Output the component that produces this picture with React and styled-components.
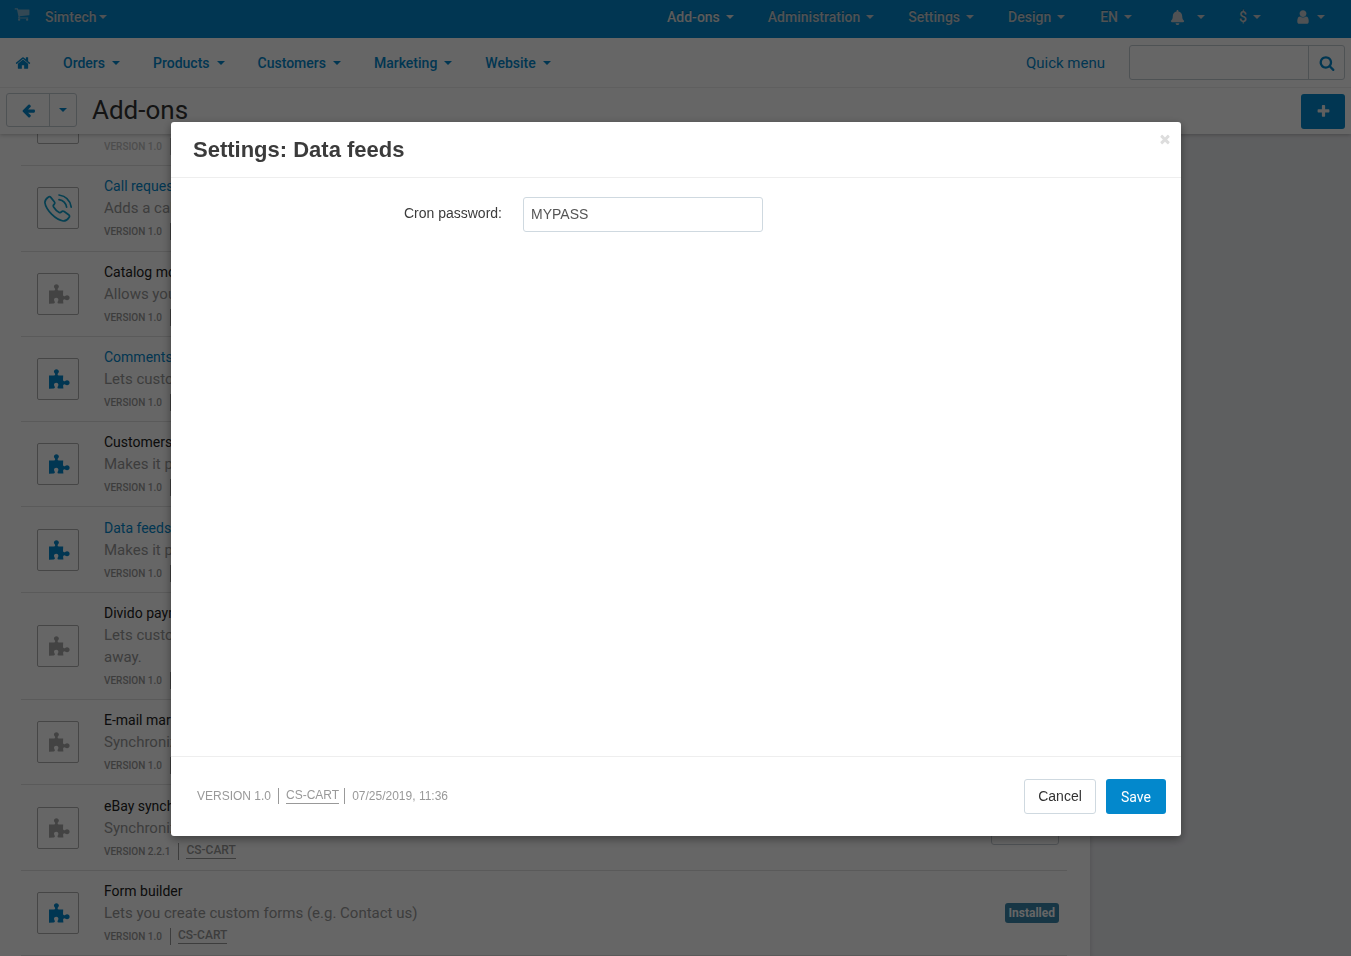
import React from 'react';
import styled, { createGlobalStyle } from 'styled-components';
import { FaBell } from 'react-icons/fa';

const paths = {
    cart: 'M704 1536q0 52-38 90t-90 38-90-38-38-90 38-90 90-38 90 38 38 90zm896 0q0 52-38 90t-90 38-90-38-38-90 38-90 90-38 90 38 38 90zm128-1088v512q0 24-16.5 42.5t-40.5 21.5l-1044 122q13 60 13 70 0 16-24 64h920q26 0 45 19t19 45-19 45-45 19h-1024q-26 0-45-19t-19-45q0-11 8-31.5t16-36 21.5-40 15.5-29.5l-177-823h-204q-26 0-45-19t-19-45 19-45 45-19h256q16 0 28.5 6.5t19.5 15.5 13 24.5 8 26 5.5 29.5 4.5 26h1201q26 0 45 19t19 45z',
    home: 'M1472 992v480q0 26-19 45t-45 19h-384v-384h-256v384h-384q-26 0-45-19t-19-45v-480q0-1 .5-3t.5-3l575-474 575 474q1 2 1 6zm223-69l-62 74q-8 9-21 11h-3q-13 0-21-7l-692-577-692 577q-12 8-24 7-13-2-21-11l-62-74q-8-10-7-23.5t11-21.5l719-599q32-26 76-26t76 26l244 204v-195q0-14 9-23t23-9h192q14 0 23 9t9 23v408l219 182q10 8 11 21.5t-7 23.5z',
    user: 'M1536 1399q0 109-62.5 187t-150.5 78h-854q-88 0-150.5-78t-62.5-187q0-85 8.5-160.5t31.5-152 58.5-131 94-89 134.5-34.5q131 128 313 128t313-128q76 0 134.5 34.5t94 89 58.5 131 31.5 152 8.5 160.5zm-256-887q0 159-112.5 271.5t-271.5 112.5-271.5-112.5-112.5-271.5 112.5-271.5 271.5-112.5 271.5 112.5 112.5 271.5z',
    search: 'M1216 832q0-185-131.5-316.5t-316.5-131.5-316.5 131.5-131.5 316.5 131.5 316.5 316.5 131.5 316.5-131.5 131.5-316.5zm512 832q0 52-38 90t-90 38q-54 0-90-38l-343-342q-179 124-399 124-143 0-273.5-55.5t-225-150-150-225-55.5-273.5 55.5-273.5 150-225 225-150 273.5-55.5 273.5 55.5 225 150 150 225 55.5 273.5q0 220-124 399l343 343q37 37 37 90z',
    plus: 'M1600 736v192q0 40-28 68t-68 28h-416v416q0 40-28 68t-68 28h-192q-40 0-68-28t-28-68v-416h-416q-40 0-68-28t-28-68v-192q0-40 28-68t68-28h416v-416q0-40 28-68t68-28h192q40 0 68 28t28 68v416h416q40 0 68 28t28 68z',
    back: 'M1664 896v128q0 53-32.5 90.5t-84.5 37.5h-704l293 294q38 36 38 90t-38 90l-75 76q-37 37-90 37-52 0-91-37l-651-652q-37-37-37-90 0-52 37-91l651-650q38-38 91-38 52 0 90 38l75 74q38 38 38 91t-38 91l-293 293h704q52 0 84.5 37.5t32.5 90.5z',
    times: 'M1490 1322q0 40-28 68l-136 136q-28 28-68 28t-68-28l-294-294-294 294q-28 28-68 28t-68-28l-136-136q-28-28-28-68t28-68l294-294-294-294q-28-28-28-68t28-68l136-136q28-28 68-28t68 28l294 294 294-294q28-28 68-28t68 28l136 136q28 28 28 68t-28 68l-294 294 294 294q28 28 28 68z',
};

const Icon = ({ name, size = 16 }) => (
    <svg width={size} height={size} viewBox="0 0 1792 1792" fill="currentColor" aria-hidden="true">
        <path d={paths[name]} />
    </svg>
);

const Puzzle = () => (
    <svg width="22" height="20" viewBox="0 0 22 20" fill="currentColor" aria-hidden="true">
        <path d="M0 6.4 L4.6 6.6 Q6.4 6.4 6.2 5.2 C6 4.5 4.9 3.7 4.9 2.6 C4.9 1.1 6 .2 7.4 .2 C8.8 .2 9.9 1.1 9.9 2.6 C9.9 3.7 8.8 4.5 8.6 5.2 Q8.4 6.4 10 6.6 L14.2 6.4 L14 10.4 Q14.1 12.4 15.4 12.3 C16.2 12.2 16.7 11.2 18 11.2 C19.6 11.2 20.6 12.3 20.6 13.7 C20.6 15.1 19.6 16.2 18 16.2 C16.8 16.2 16.2 15.2 15.4 15.2 Q14.1 15.2 14.1 16.8 L14.4 19.4 L9.6 19.6 Q8.3 19.4 8.5 18.2 C8.7 17.5 9.4 16.9 9.4 15.8 C9.4 14.6 8.4 13.8 7.2 13.8 C6 13.8 5 14.6 5 15.8 C5 16.9 5.8 17.5 5.9 18.3 Q6 19.4 4.8 19.5 L0 19.8 Z" />
    </svg>
);

const PhoneCall = () => (
    <svg width="28" height="28" viewBox="0 0 28 28" fill="none" stroke="currentColor" strokeWidth="1.7" strokeLinecap="round" aria-hidden="true">
        <path d="M4.2 3.2 Q5.7 2.1 7 3.6 L10.3 7.8 Q11.4 9.3 10 10.5 Q8.7 11.6 9.6 13 Q11.8 16.6 15.2 18.5 Q16.4 19.1 17.4 17.9 Q18.6 16.4 20.2 17.5 L24.6 20.7 Q26.2 22 25 23.5 Q22.8 27 19.2 27 Q13.6 26.2 7.6 20.2 Q1.6 13.8 .9 8.6 Q.8 5.6 4.2 3.2 Z" />
        <path d="M15 1 Q25.8 2.8 27.2 13.2" />
        <path d="M15 5.6 Q21.6 6.8 22.6 13.2" />
    </svg>
);

const leftMenu = ['Orders', 'Products', 'Customers', 'Marketing', 'Website'];
const topMenu = ['Add-ons', 'Administration', 'Settings', 'Design'];

const addons = [
    { name: 'Buy together', text: 'Lets you bundle products and sell them together', version: '1.0', icon: 'puzzle', faded: true, action: 'install' },
    { name: 'Call requests', link: true, text: 'Adds a callback request form and the buy now with one click button', version: '1.0', icon: 'phone' },
    { name: 'Catalog mode', text: 'Allows you to turn off the checkout in the store', version: '1.0', icon: 'puzzle', action: 'install' },
    { name: 'Comments and reviews', link: true, text: 'Lets customers leave comments and reviews', version: '1.0', icon: 'puzzle', active: true },
    { name: 'Customers also bought', text: 'Makes it possible to show products bought together', version: '1.0', icon: 'puzzle', active: true },
    { name: 'Data feeds', link: true, text: 'Makes it possible to export products in data feeds', version: '1.0', icon: 'puzzle', active: true },
    { name: 'Divido payments', text: 'Lets customers pay for products in instalments, while you receive the full payment right away.', version: '1.0', icon: 'puzzle', action: 'install' },
    { name: 'E-mail marketing', text: 'Synchronizes newsletter subscribers with mailing services', version: '1.0', icon: 'puzzle', action: 'install' },
    { name: 'eBay synchronization', text: 'Synchronizes products and orders with eBay', version: '2.2.1', icon: 'puzzle', action: 'install' },
    { name: 'Form builder', text: 'Lets you create custom forms (e.g. Contact us)', version: '1.0', icon: 'puzzle', active: true },
];

const AddonRow = ({ addon }) => (
    <Row>
        <IconBox $active={addon.active} $phone={addon.icon === 'phone'}>
            {addon.icon === 'phone' ? <PhoneCall /> : <Puzzle />}
        </IconBox>
        <Info $faded={addon.faded}>
            {addon.link ? <NameLink href="#">{addon.name}</NameLink> : <Name>{addon.name}</Name>}
            <Description>{addon.text}</Description>
            <Meta>
                <Version>Version {addon.version}</Version>
                <Developer href="#">CS-Cart</Developer>
            </Meta>
        </Info>
        {addon.action ? <InstallButton type="button">Install</InstallButton> : <Badge>Installed</Badge>}
    </Row>
);

const App = () => (
    <>
        <GlobalStyle />
        <Page>
            <Header>
                <TopBar>
                    <Store>
                        <CartLink href="#" aria-label="Storefront"><Icon name="cart" /></CartLink>
                        <TopLink href="#" $tight>Simtech<Caret /></TopLink>
                    </Store>
                    <TopNav>
                        {topMenu.map((item, i) => (
                            <TopLink href="#" key={item} $current={i === 0}>{item}<Caret /></TopLink>
                        ))}
                    </TopNav>
                    <Tools>
                        <TopLink href="#">EN<Caret /></TopLink>
                        <TopLink href="#" aria-label="Notifications" $wide><FaBell size={15} /><Caret /></TopLink>
                        <TopLink href="#">$<Caret /></TopLink>
                        <TopLink href="#" aria-label="Account"><Icon name="user" /><Caret /></TopLink>
                    </Tools>
                </TopBar>
                <MenuBar>
                    <HomeLink href="#" aria-label="Home"><Icon name="home" /></HomeLink>
                    <Menu>
                        {leftMenu.map((item) => (
                            <MenuLink href="#" key={item}>{item}<Caret /></MenuLink>
                        ))}
                    </Menu>
                    <QuickMenu href="#">Quick menu</QuickMenu>
                    <Search>
                        <SearchInput type="text" aria-label="Search" />
                        <SearchButton type="button" aria-label="Search"><Icon name="search" /></SearchButton>
                    </Search>
                </MenuBar>
                <TitleBar>
                    <BackGroup>
                        <BackButton type="button" aria-label="Back"><Icon name="back" size={15} /></BackButton>
                        <BackMenu type="button" aria-label="Recent pages"><Caret /></BackMenu>
                    </BackGroup>
                    <PageTitle>Add-ons</PageTitle>
                    <AddButton type="button" aria-label="Add"><Icon name="plus" size={15} /></AddButton>
                </TitleBar>
            </Header>
            <Main>
                <List>
                    {addons.map((addon) => <AddonRow addon={addon} key={addon.name} />)}
                </List>
                <Sidebar />
            </Main>
        </Page>
        <Backdrop>
            <Dialog role="dialog" aria-modal="true" aria-labelledby="dialog-title">
                <DialogHeader>
                    <DialogTitle id="dialog-title">Settings: Data feeds</DialogTitle>
                    <Close type="button" aria-label="Close"><Icon name="times" size={14} /></Close>
                </DialogHeader>
                <DialogBody>
                    <Label htmlFor="cron">Cron password:</Label>
                    <Field id="cron" type="text" defaultValue="MYPASS" />
                </DialogBody>
                <DialogFooter>
                    <FooterMeta>
                        <span>VERSION 1.0</span>
                        <FooterLink><a href="#">CS-CART</a></FooterLink>
                        <span>07/25/2019, 11:36</span>
                    </FooterMeta>
                    <CancelButton type="button">Cancel</CancelButton>
                    <SaveButton type="button">Save</SaveButton>
                </DialogFooter>
            </Dialog>
        </Backdrop>
    </>
);

export default App;

const GlobalStyle = createGlobalStyle`
  * {
    box-sizing: border-box;
  }
  body {
    margin: 0;
    font-family: Roboto, sans-serif;
    font-size: 14px;
    line-height: 20px;
    color: #333;
    background: #fff;
  }
  a {
    color: #0388cc;
    text-decoration: none;
  }
  button, input {
    font: inherit;
  }
  button {
    display: flex;
    align-items: center;
    justify-content: center;
    padding: 0;
    cursor: pointer;
  }
  svg {
    flex: none;
  }
`;

const Page = styled.div`
  min-height: 100vh;
  display: flex;
  flex-direction: column;
`;

const Header = styled.header`
  position: relative;
  z-index: 1;
  flex: none;
  background: #fff;
  box-shadow: 0 1px 4px rgba(0, 0, 0, 0.25);
`;

const TopBar = styled.div`
  display: flex;
  align-items: center;
  height: 38px;
  padding: 0 26px 4px 14px;
  background: #0388cc;
`;

const Caret = styled.span`
  flex: none;
  border: 4px solid transparent;
  border-top-color: currentColor;
  border-bottom: 0;
`;

const Store = styled.div`
  flex: 1;
  display: flex;
  align-items: center;
  gap: 15px;
`;

const CartLink = styled.a`
  display: flex;
  padding-bottom: 6px;
  color: #7fb4d2;
`;

const TopLink = styled.a`
  display: flex;
  align-items: center;
  gap: ${({ $tight, $wide }) => ($tight ? '2px' : $wide ? '12px' : '6px')};
  padding-left: ${({ $wide }) => ($wide ? '4px' : '0')};
  font-size: 14px;
  font-weight: 500;
  color: ${({ $current }) => ($current ? '#e4e4e4' : '#c8ced2')};
  text-shadow: 0 -1px 0 rgba(0, 0, 0, 0.25);
`;

const TopNav = styled.nav`
  display: flex;
  gap: 34px;
`;

const Tools = styled.div`
  display: flex;
  gap: 34px;
  margin-left: 35px;
`;

const MenuBar = styled.div`
  display: flex;
  align-items: center;
  height: 50px;
  padding: 0 6px 0 15px;
  border-bottom: 1px solid #ededed;
`;

const HomeLink = styled.a`
  display: flex;
  margin-right: 32px;
`;

const Menu = styled.nav`
  flex: 1;
  display: flex;
  gap: 33px;
`;

const MenuLink = styled.a`
  display: flex;
  align-items: center;
  gap: 7px;
  font-weight: 500;
`;

const QuickMenu = styled.a`
  margin-right: 24px;
  font-size: 15px;
`;

const Search = styled.div`
  display: flex;
  width: 216px;
  height: 35px;
  border: 1px solid #c4ccd2;
  border-radius: 3px;
`;

const SearchInput = styled.input`
  flex: 1;
  min-width: 0;
  border: 0;
  background: none;
`;

const SearchButton = styled.button`
  width: 36px;
  border: 0;
  border-left: 1px solid #c4ccd2;
  background: none;
  color: #0388cc;
`;

const TitleBar = styled.div`
  display: flex;
  align-items: center;
  height: 46px;
  padding: 0 6px;
`;

const BackGroup = styled.div`
  display: flex;
  width: 71px;
  height: 34px;
  margin-bottom: 2px;
  border: 1px solid #c4ccd2;
  border-radius: 3px;
`;

const BackButton = styled.button`
  flex: 1;
  border: 0;
  background: none;
  color: #0388cc;
`;

const BackMenu = styled.button`
  width: 27px;
  border: 0;
  border-left: 1px solid #c4ccd2;
  background: none;
  color: #0388cc;
`;

const PageTitle = styled.h1`
  flex: 1;
  margin: 0 0 2px 15px;
  font-size: 26px;
  font-weight: 400;
  line-height: 40px;
`;

const AddButton = styled.button`
  width: 44px;
  height: 35px;
  border: 0;
  border-radius: 3px;
  background: #0388cc;
  color: #eee;
`;

// The list is scrolled a little under the header
const Main = styled.main`
  flex: 1;
  display: flex;
  margin-top: -53px;
`;

const List = styled.ul`
  flex: 1;
  display: flex;
  flex-direction: column;
  margin: 0;
  padding: 0 23px 0 21px;
  list-style: none;
`;

const Sidebar = styled.aside`
  width: 261px;
  background: #ecedf1;
  box-shadow: inset 3px 0 4px -2px rgba(0, 0, 0, 0.12);
`;

const Row = styled.li`
  flex: 1 0 auto;
  display: flex;
  align-items: center;
  padding: 0 8px 0 16px;
  border-bottom: 1px solid #e2e2e2;
`;

const IconBox = styled.div`
  display: flex;
  align-items: center;
  justify-content: center;
  flex: none;
  width: 42px;
  height: 42px;
  padding: ${({ $phone }) => ($phone ? '0' : '0 0 0 4px')};
  border: 1px solid #b0b0b0;
  border-radius: 2px;
  color: ${({ $active, $phone }) => ($phone ? '#11a0cc' : $active ? '#0388cc' : '#a8a8a8')};
`;

const Info = styled.div`
  width: 600px;
  margin: 0 auto 0 25px;
  padding: 9px 0 6px;
  opacity: ${({ $faded }) => ($faded ? 0.6 : 1)};
`;

const Name = styled.div`
  color: #222;
  line-height: 22px;
`;

const NameLink = styled.a`
  display: block;
  line-height: 22px;
`;

const Description = styled.div`
  color: #999;
  font-size: 15px;
  line-height: 22px;
`;

const Meta = styled.div`
  display: flex;
  align-items: center;
  height: 25px;
  color: #999;
  text-transform: uppercase;
  font-weight: 500;
`;

const Version = styled.span`
  padding-right: 8px;
  border-right: 1px solid #999;
  font-size: 10px;
  line-height: 17px;
`;

const Developer = styled.a`
  margin-left: 7px;
  border-bottom: 1px solid #999;
  font-size: 12px;
  line-height: 15px;
  color: #999;
`;

const InstallButton = styled.button`
  width: 68px;
  height: 35px;
  border: 1px solid #c4ccd2;
  border-radius: 3px;
  background: #fff;
  color: #333;
`;

const Badge = styled.span`
  padding: 0 4px;
  border-radius: 3px;
  background: #3a87ad;
  color: #fff;
  font-size: 12px;
  font-weight: 700;
  line-height: 20px;
`;

const Backdrop = styled.div`
  position: fixed;
  inset: 0;
  z-index: 2;
  display: flex;
  padding: 122px 170px 120px 171px;
  background: rgba(0, 0, 0, 0.6);
`;

const Dialog = styled.section`
  flex: 1;
  display: flex;
  flex-direction: column;
  border-radius: 3px;
  background: #fff;
  box-shadow: 0 3px 10px rgba(0, 0, 0, 0.4);
  font-family: 'Liberation Sans', Arial, sans-serif;
  color: #3b3b3b;
`;

const DialogHeader = styled.div`
  display: flex;
  align-items: flex-start;
  justify-content: space-between;
  padding: 8px 9px 7px 22px;
  border-bottom: 1px solid #eee;
`;

const DialogTitle = styled.h3`
  margin: 0;
  font-size: 22px;
  line-height: 40px;
`;

const Close = styled.button`
  margin-top: 2px;
  border: 0;
  background: none;
  color: #ddd;
`;

const DialogBody = styled.div`
  flex: 1;
  display: flex;
  align-items: flex-start;
  gap: 21px;
  padding: 19px 22px;
`;

const Label = styled.label`
  width: 309px;
  padding-top: 6px;
  text-align: right;
`;

const Field = styled.input`
  width: 240px;
  height: 35px;
  padding: 0 7px 2px;
  border: 1px solid #cfd9e0;
  border-radius: 3px;
  background: #fff;
  color: #555;
`;

const DialogFooter = styled.div`
  display: flex;
  align-items: center;
  gap: 10px;
  height: 80px;
  padding: 0 15px 0 26px;
  border-top: 1px solid #eee;
`;

const FooterMeta = styled.div`
  flex: 1;
  display: flex;
  align-items: center;
  gap: 7px;
  padding-bottom: 2px;
  font-size: 12px;
  line-height: 16px;
  color: #999;
`;

const FooterLink = styled.span`
  padding: 0 5px 0 7px;
  border: solid #999;
  border-width: 0 1px;

  a {
    display: block;
    border-bottom: 1px solid #999;
    line-height: 15px;
    color: #999;
  }
`;

const CancelButton = styled.button`
  width: 72px;
  height: 35px;
  padding-bottom: 2px;
  border: 1px solid #cfd9e0;
  border-radius: 3px;
  background: #fff;
  color: #333;
`;

const SaveButton = styled.button`
  width: 60px;
  height: 35px;
  border: 0;
  border-radius: 3px;
  background: #0388cc;
  color: #fff;
  font-family: Roboto, sans-serif;
`;
